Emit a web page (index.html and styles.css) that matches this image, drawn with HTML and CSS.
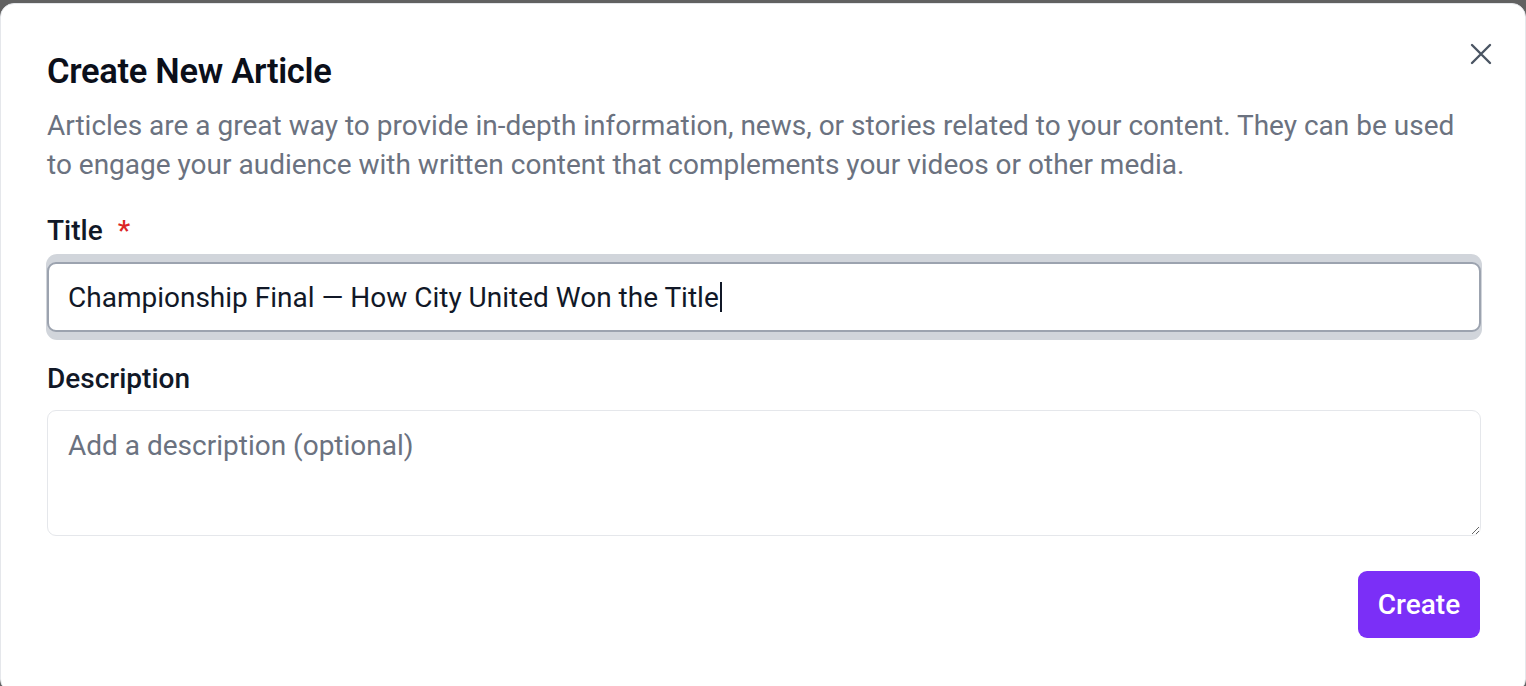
FILE: index.html
```html
<!DOCTYPE html>
<html lang="en">
<head>
<meta charset="utf-8">
<title>Create New Article</title>
<link rel="stylesheet" href="styles.css">
</head>
<body>
<div class="dialog">
  <button class="close" aria-label="Close">
    <svg width="24" height="24" viewBox="0 0 24 24" fill="none" stroke="#4b5563" stroke-width="2.4" stroke-linecap="round"><path d="M3 3 L21 21 M21 3 L3 21"/></svg>
  </button>
  <h2 class="heading">Create New Article</h2>
  <p class="intro">Articles are a great way to provide in-depth information, news, or stories related to your content. They can be used to engage your audience with written content that complements your videos or other media.</p>
  <div class="label label-title">Title <span class="req">*</span></div>
  <div class="ring">
    <div class="input">Championship Final — How City United Won the Title<span class="caret"></span></div>
  </div>
  <div class="label label-desc">Description</div>
  <textarea class="textarea" placeholder="Add a description (optional)"></textarea>
  <div class="actions">
    <button class="create">Create</button>
  </div>
</div>
</body>
</html>
```

FILE: styles.css
```css
html, body {
  margin: 0;
  padding: 0;
  height: 100%;
  overflow: hidden;
}
body {
  background: #616161;
  font-family: Roboto, "Liberation Sans", sans-serif;
}
.dialog {
  position: relative;
  box-sizing: border-box;
  margin-top: 3px;
  height: 690px;
  background: #fff;
  border: 1px solid #e5e7eb;
  border-radius: 14px;
  padding: 49px 44px 0 46px;
}
.close {
  position: absolute;
  top: 38px;
  right: 32px;
  width: 24px;
  height: 24px;
  padding: 0;
  border: 0;
  background: none;
  display: flex;
}
.heading {
  margin: 0;
  font-size: 34.5px;
  line-height: 36px;
  font-weight: 600;
  color: #0b0f1a;
  letter-spacing: -0.3px;
}
.intro {
  margin: 17px 0 0;
  font-size: 28px;
  line-height: 39px;
  color: #6b7280;
}
.label {
  font-size: 28px;
  line-height: 36px;
  font-weight: 500;
  color: #111827;
}
.label-title {
  margin-top: 29px;
}
.req {
  color: #dc2626;
  margin-left: 8px;
}
.ring {
  margin: 5px -1px 0;
  padding: 8px 1px;
  background: #d1d5db;
  border-radius: 11px;
}
.input {
  box-sizing: border-box;
  height: 70px;
  border: 2px solid #9ca3af;
  border-radius: 9px;
  background: #fff;
  padding: 0 19px;
  display: flex;
  align-items: center;
  font-size: 28px;
  color: #111827;
  white-space: nowrap;
}
.caret {
  display: inline-block;
  width: 2px;
  height: 30px;
  margin-left: 1px;
  background: #111827;
}
.label-desc {
  margin-top: 21px;
}
.textarea {
  display: block;
  box-sizing: border-box;
  width: 100%;
  height: 126px;
  margin-top: 13px;
  border: 1.5px solid #e5e7eb;
  border-radius: 9px;
  padding: 17px 20px;
  font-family: Roboto, "Liberation Sans", sans-serif;
  font-size: 28px;
  line-height: 36px;
  color: #111827;
  outline: none;
  resize: vertical;
}
.textarea::placeholder {
  color: #6b7280;
}
.actions {
  display: flex;
  justify-content: flex-end;
  margin-top: 35px;
  padding-right: 1px;
}
.create {
  width: 122px;
  height: 67px;
  border: 0;
  border-radius: 9px;
  background: #7b2ff7;
  color: #fff;
  font-family: Roboto, "Liberation Sans", sans-serif;
  font-size: 28px;
  font-weight: 500;
}
```
